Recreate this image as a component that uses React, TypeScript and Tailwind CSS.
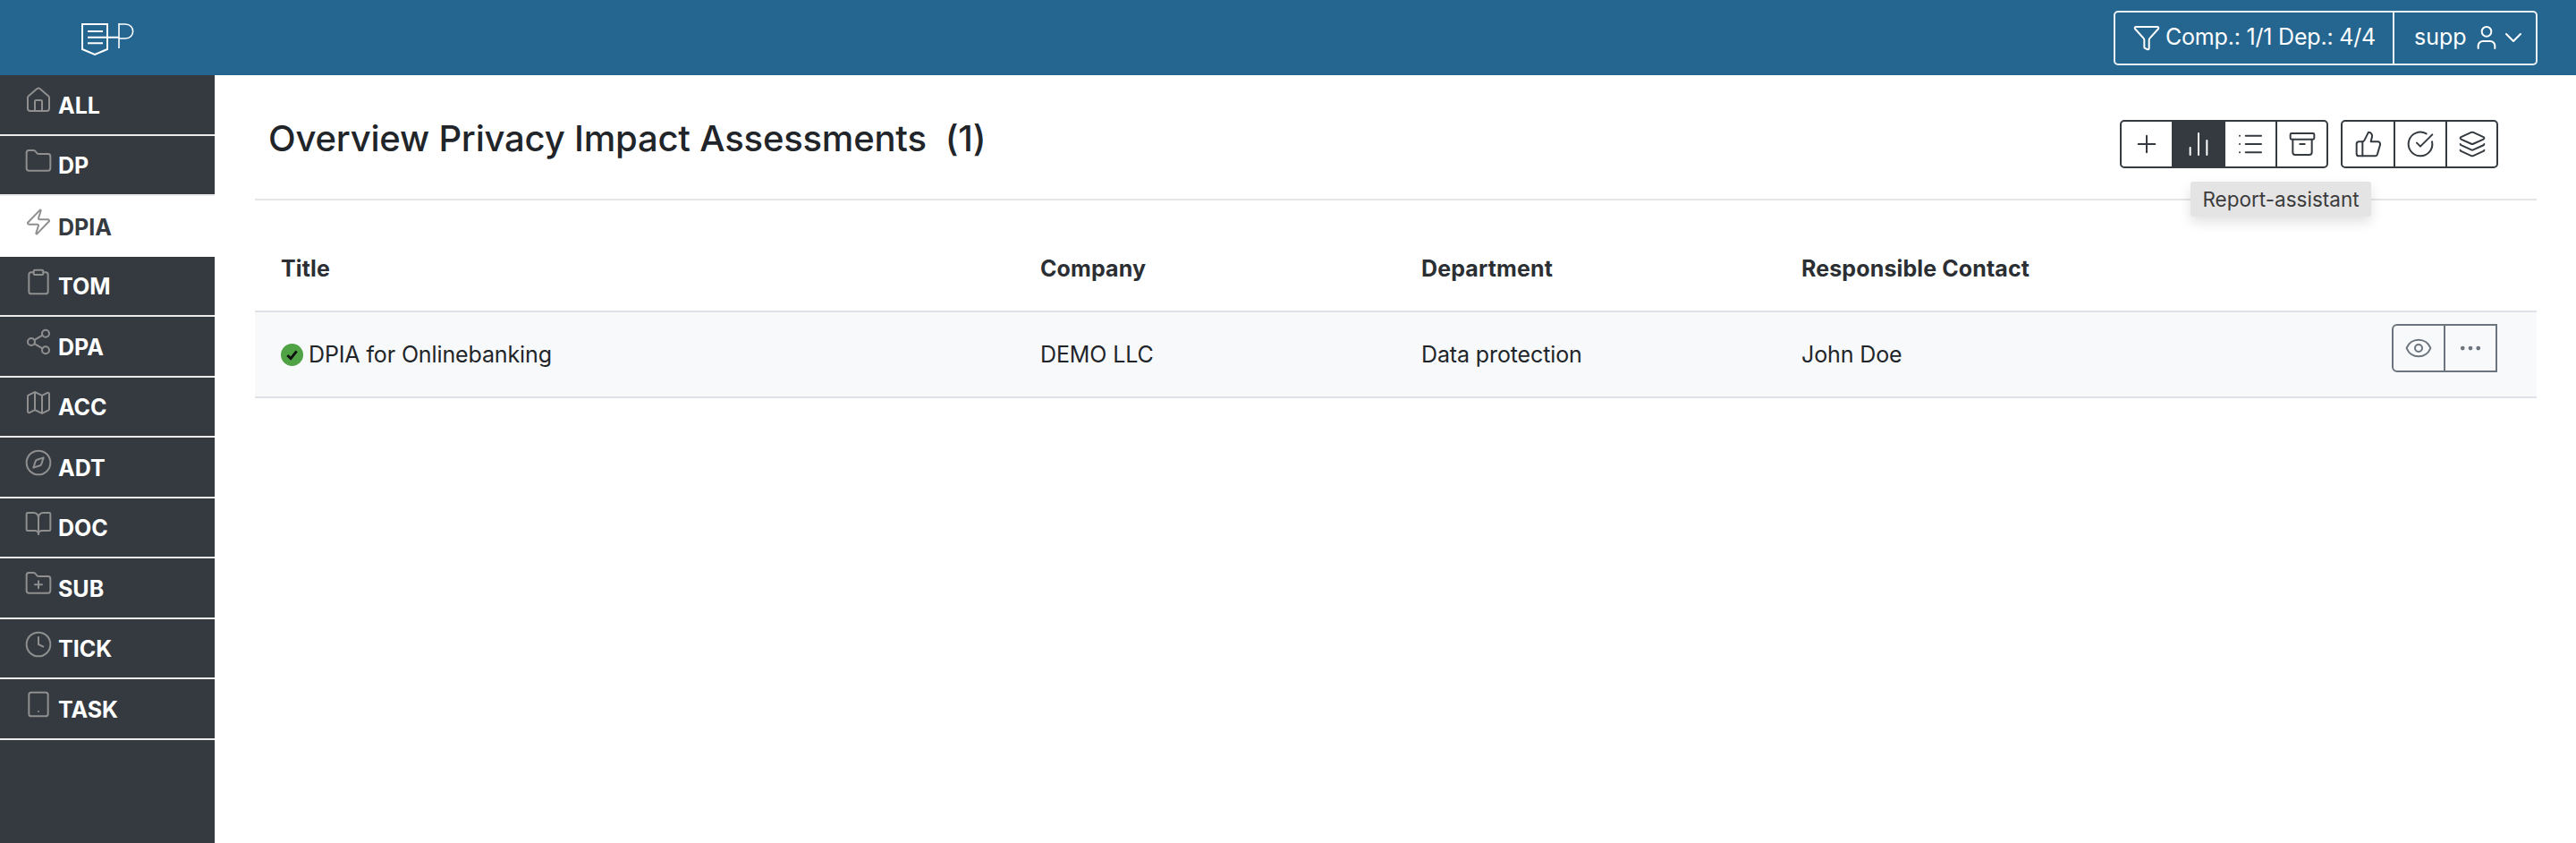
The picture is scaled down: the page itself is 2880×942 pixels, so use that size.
import React from 'react';
import {
    Archive, BookOpen, ChartNoAxesColumn, ChevronDown, CircleCheckBig, Clipboard, Clock, Compass, Ellipsis, Eye,
    Folder, FolderPlus, Funnel, House, Layers, List, Map as MapIcon, Plus, Share2, Tablet, ThumbsUp, User, Zap,
} from 'lucide-react';

const navItems = [
    { label: 'ALL', icon: House },
    { label: 'DP', icon: Folder },
    { label: 'DPIA', icon: Zap, active: true },
    { label: 'TOM', icon: Clipboard },
    { label: 'DPA', icon: Share2 },
    { label: 'ACC', icon: MapIcon },
    { label: 'ADT', icon: Compass },
    { label: 'DOC', icon: BookOpen },
    { label: 'SUB', icon: FolderPlus },
    { label: 'TICK', icon: Clock },
    { label: 'TASK', icon: Tablet },
];

const Logo = () => (
    <svg width="60" height="37" viewBox="0 0 60 37" fill="none" stroke="white" strokeWidth="2" className="mt-[4px]">
        <path d="M1 1H29V29L15 35L1 29Z" />
        <path d="M7 9H24M7 15.7H42M7 22.3H24" />
        <path d="M42 0V28" strokeWidth="1.6" />
        <path d="M42 1H49C60.5 1 60.5 17 49 17H42" strokeWidth="1.6" />
    </svg>
);

const Header = () => (
    <header className="flex h-[84px] items-center justify-between bg-[#256690] pl-[91px] pr-[43px]">
        <Logo />
        <div className="flex h-[61px] items-stretch rounded-[5px] border-2 border-white/90 text-[25px] text-white">
            <div className="flex w-[312px] items-center gap-[5px] border-r-2 border-white/90 pl-[19px]">
                <Funnel size={32} strokeWidth={1.5} />
                <span className="tracking-[-0.2px]">Comp.: 1/1 Dep.: 4/4</span>
            </div>
            <div className="flex w-[158px] items-center pl-[22px]">
                <span>supp</span>
                <User size={32} strokeWidth={1.5} className="ml-[6px]" />
                <ChevronDown size={32} strokeWidth={1.5} className="-ml-[2px]" />
            </div>
        </div>
    </header>
);

const Sidebar = () => (
    <aside className="flex w-[240px] shrink-0 flex-col bg-[#343a40]">
        {navItems.map(({ label, icon: Icon, active }) => (
            <div
                key={label}
                className={`flex h-[67.5px] items-center gap-[6px] pl-[27px] text-[25px] font-bold ${
                    active ? 'bg-white text-[#343a40]' : 'border-b-2 border-white/90 text-white'
                }`}
            >
                <Icon size={32} strokeWidth={1.5} className="mb-[9px] text-[#8f8f8f]" />
                <span className="mt-[3px]">{label}</span>
            </div>
        ))}
    </aside>
);

const toolGroups = [
    [
        { icon: Plus, w: 'w-[56px]' },
        { icon: ChartNoAxesColumn, w: 'w-[60px]', active: true },
        { icon: List, w: 'w-[56px]' },
        { icon: Archive, w: 'w-[57px]', split: true },
    ],
    [
        { icon: ThumbsUp, w: 'w-[57px]' },
        { icon: CircleCheckBig, w: 'w-[58px]', split: true },
        { icon: Layers, w: 'w-[57px]', split: true },
    ],
];

const Toolbar = () => (
    <div className="relative flex gap-[14px]">
        {toolGroups.map((group, i) => (
            <div key={i} className="flex h-[54px] overflow-hidden rounded-[5px] border-2 border-[#343a40]">
                {group.map(({ icon: Icon, w, active, split }, j) => (
                    <div
                        key={j}
                        className={`flex items-center justify-center ${w} ${
                            active ? 'bg-[#343a40] text-white' : 'text-[#343a40]'
                        } ${split ? 'border-l-2 border-[#343a40]' : ''}`}
                    >
                        <Icon size={32} strokeWidth={1.5} />
                    </div>
                ))}
            </div>
        ))}
        <div className="absolute left-[79px] top-[69px] z-10 flex h-[39px] w-[202px] items-center justify-center rounded-[3px] bg-[#e4e4e4] text-[22.5px] text-[#3c3c3c] shadow-[0_6px_14px_rgba(0,0,0,0.12)]">
            Report-assistant
        </div>
    </div>
);

const columns = ['Title', 'Company', 'Department', 'Responsible Contact'];
const cellWidths = ['w-[878px]', 'w-[426px]', 'w-[425px]', 'flex-1'];

const Table = () => (
    <div className="text-[25px] text-[#212529]">
        <div className="flex h-[125px] items-center border-b-2 border-[#dee2e6] pt-[30px] font-bold tracking-[0.12px] text-[#2b2f33]">
            {columns.map((col, i) => (
                <div key={col} className={`${cellWidths[i]} ${i === 0 ? 'pl-[29px]' : ''}`}>
                    {col}
                </div>
            ))}
        </div>
        <div className="flex h-[96px] items-center border-b-2 border-[#dee2e6] bg-[#f8f9fa] tracking-[-0.12px]">
            <div className={`flex items-center gap-[6px] pl-[29px] ${cellWidths[0]}`}>
                <span className="flex h-[25px] w-[25px] items-center justify-center rounded-full bg-[#4fa345]">
                    <svg width="15" height="15" viewBox="0 0 16 16" fill="none" stroke="#111" strokeWidth="3">
                        <path d="M2.5 8.5L6.5 12.5L13.5 3.5" />
                    </svg>
                </span>
                <span className="mt-[2px]">DPIA for Onlinebanking</span>
            </div>
            <div className={`mt-[2px] ${cellWidths[1]}`}>DEMO LLC</div>
            <div className={`mt-[2px] ${cellWidths[2]}`}>Data protection</div>
            <div className="flex flex-1 items-center justify-between pr-[44px]">
                <span className="mt-[2px]">John Doe</span>
                <div className="mb-[14px] flex h-[54px] w-[118px] rounded-l-[6px] border-2 border-[#6c757d] text-[#6c757d]">
                    <div className="flex w-[58px] items-center justify-center border-r-2 border-[#6c757d]">
                        <Eye size={32} strokeWidth={1.5} />
                    </div>
                    <div className="flex flex-1 items-center justify-center">
                        <Ellipsis size={30} strokeWidth={1.8} />
                    </div>
                </div>
            </div>
        </div>
    </div>
);

export default function App() {
    return (
        <div className="flex h-[942px] flex-col overflow-hidden bg-white font-['Inter',sans-serif]">
            <Header />
            <div className="flex flex-1">
                <Sidebar />
                <main className="flex-1 pl-[45px] pr-[44px]">
                    <div className="flex h-[140px] items-start justify-between border-b-2 border-[#e5e5e5] pl-[15px]">
                        <h1 className="mt-[44px] text-[40px] font-medium leading-[54px] tracking-[-0.2px] text-[#212529]">
                            Overview Privacy Impact Assessments&nbsp; (1)
                        </h1>
                        <div className="mr-[43px] mt-[50px]">
                            <Toolbar />
                        </div>
                    </div>
                    <Table />
                </main>
            </div>
        </div>
    );
}
